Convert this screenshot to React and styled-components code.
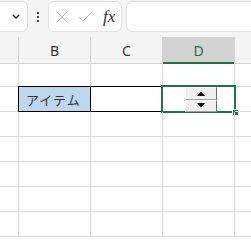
import React from 'react';
import styled, { createGlobalStyle } from 'styled-components';

const Global = createGlobalStyle`
  html, body { margin: 0; padding: 0; background: #fff; }
  body { font-family: "Noto Sans", "Liberation Sans", sans-serif; overflow: hidden; }
  #root { width: 251px; height: 243px; overflow: hidden; }
`;

const Page = styled.div`
  width: 251px;
  height: 243px;
  overflow: hidden;
  background: #fff;
`;

const Toolbar = styled.div`
  height: 37px;
  box-sizing: border-box;
  padding-top: 1px;
  background: #f5f5f5;
  display: flex;
  align-items: flex-start;
  & > * { flex: none; }
`;

const NameBox = styled.div`
  width: 28px;
  height: 31px;
  box-sizing: border-box;
  background: #fff;
  border: 1px solid #e1e1e1;
  border-left: none;
  border-radius: 0 6px 6px 0;
  display: flex;
  align-items: center;
  justify-content: flex-end;
  padding-right: 7px;
`;

const Dots = styled.div`
  width: 20px;
  height: 31px;
  display: flex;
  flex-direction: column;
  align-items: center;
  justify-content: center;
  gap: 2px;
  & > span {
    width: 2px;
    height: 2px;
    background: #444;
  }
`;

const FxBox = styled.div`
  width: 74px;
  height: 31px;
  box-sizing: border-box;
  background: #fff;
  border: 1px solid #e1e1e1;
  border-radius: 6px;
  display: flex;
  align-items: center;
  padding-left: 7px;
  gap: 10px;
`;

const Fx = styled.span`
  font-family: "Liberation Serif", "DejaVu Serif", serif;
  font-style: italic;
  font-size: 17px;
  color: #333;
  margin-left: 1px;
  line-height: 1;
`;

const Formula = styled.div`
  margin-left: 4px;
  width: 140px;
  height: 31px;
  box-sizing: border-box;
  background: #fff;
  border: 1px solid #e1e1e1;
  border-radius: 6px;
`;

const Grid = styled.div`
  display: grid;
  grid-template-columns: 19px 72px 72px 72px 72px;
  grid-auto-rows: 25px;
`;

const HeadCell = styled.div`
  height: 27px;
  box-sizing: border-box;
  background: ${p => (p.$active ? '#d2d2d2' : '#f5f5f5')};
  border-right: 1px solid #d4d4d4;
  border-bottom: ${p => (p.$active ? '2px solid #217346' : '1px solid #d4d4d4')};
  display: flex;
  align-items: center;
  justify-content: center;
  font-size: 14px;
  color: ${p => (p.$active ? '#217346' : '#333')};
  padding-top: ${p => (p.$active ? '1px' : '0')};
`;

const Cell = styled.div`
  position: relative;
  box-sizing: border-box;
  border-right: 1px solid #dadada;
  border-bottom: 1px solid #dadada;
  background: ${p => p.$fill || 'transparent'};
  ${p => p.$boxed && `
    border-right-color: #000;
    border-bottom-color: #000;
    box-shadow: 0 -1px 0 #000, -1px 0 0 #000, -1px -1px 0 #000;
  `}
  ${p => p.$lined && `
    border-bottom-color: #000;
    box-shadow: 0 -1px 0 #000;
  `}
  display: flex;
  align-items: center;
  padding-left: 7px;
  font-family: "Noto Sans CJK JP", "Noto Sans", sans-serif;
  font-size: 13px;
  color: #333;
  letter-spacing: 1px;
`;

const Selection = styled.div`
  position: absolute;
  left: -2px;
  top: -2px;
  right: -2px;
  bottom: -2px;
  border: 2px solid #217346;
  pointer-events: none;
`;

const FillHandle = styled.div`
  position: absolute;
  right: -4px;
  bottom: -4px;
  width: 5px;
  height: 5px;
  background: #217346;
  outline: 1px solid #fff;
`;

const Spin = styled.div`
  position: absolute;
  left: 22px;
  top: 0px;
  width: 32px;
  height: 25px;
  display: flex;
  flex-direction: column;
  z-index: 2;
`;

const SpinHalf = styled.div`
  flex: 1;
  box-sizing: border-box;
  background: #f0f0f0;
  border-top: 1px solid #fff;
  border-left: 1px solid #fff;
  border-right: 1px solid #696969;
  border-bottom: 1px solid #a0a0a0;
  display: flex;
  align-items: center;
  justify-content: center;
`;

const Arrow = ({ down }) => (
  <svg width="8" height="5" viewBox="0 0 8 5">
    <polygon points={down ? '0,0 8,0 4,4.5' : '4,0.5 8,5 0,5'} fill="#000" />
  </svg>
);

const cols = ['', 'B', 'C', 'D', ''];
const rows = 7;

export default function App() {
  return (
    <Page>
      <Global />
      <Toolbar>
        <NameBox>
          <svg width="8" height="5" viewBox="0 0 8 5">
            <path d="M0.8 0.8 L4 4 L7.2 0.8" stroke="#333" strokeWidth="1.5" fill="none" />
          </svg>
        </NameBox>
        <Dots>
          <span />
          <span />
          <span />
        </Dots>
        <FxBox>
          <svg width="12" height="12" viewBox="0 0 12 12">
            <path d="M0.5 0.5 L11.5 11.5 M11.5 0.5 L0.5 11.5" stroke="#c4c4c4" strokeWidth="1" fill="none" />
          </svg>
          <svg width="14" height="10" viewBox="0 0 14 10">
            <path d="M0.5 4.5 L5 9 L13.5 0.5" stroke="#c4c4c4" strokeWidth="1" fill="none" />
          </svg>
          <Fx>fx</Fx>
        </FxBox>
        <Formula />
      </Toolbar>
      <Grid>
        {cols.map((c, i) => (
          <HeadCell key={'h' + i} $active={c === 'D'}>
            {c}
          </HeadCell>
        ))}
        {Array.from({ length: rows }).map((_, r) =>
          cols.map((c, i) => {
            const key = r + '-' + i;
            if (r === 1 && c === 'B')
              return (
                <Cell key={key} $boxed $fill="#bdd7ee">
                  アイテム
                </Cell>
              );
            if (r === 1 && c === 'C') return <Cell key={key} $lined />;
            if (r === 1 && c === 'D')
              return (
                <Cell key={key} $lined>
                  <Selection />
                  <FillHandle />
                  <Spin>
                    <SpinHalf>
                      <Arrow />
                    </SpinHalf>
                    <SpinHalf>
                      <Arrow down />
                    </SpinHalf>
                  </Spin>
                </Cell>
              );
            return <Cell key={key} />;
          })
        )}
      </Grid>
    </Page>
  );
}
